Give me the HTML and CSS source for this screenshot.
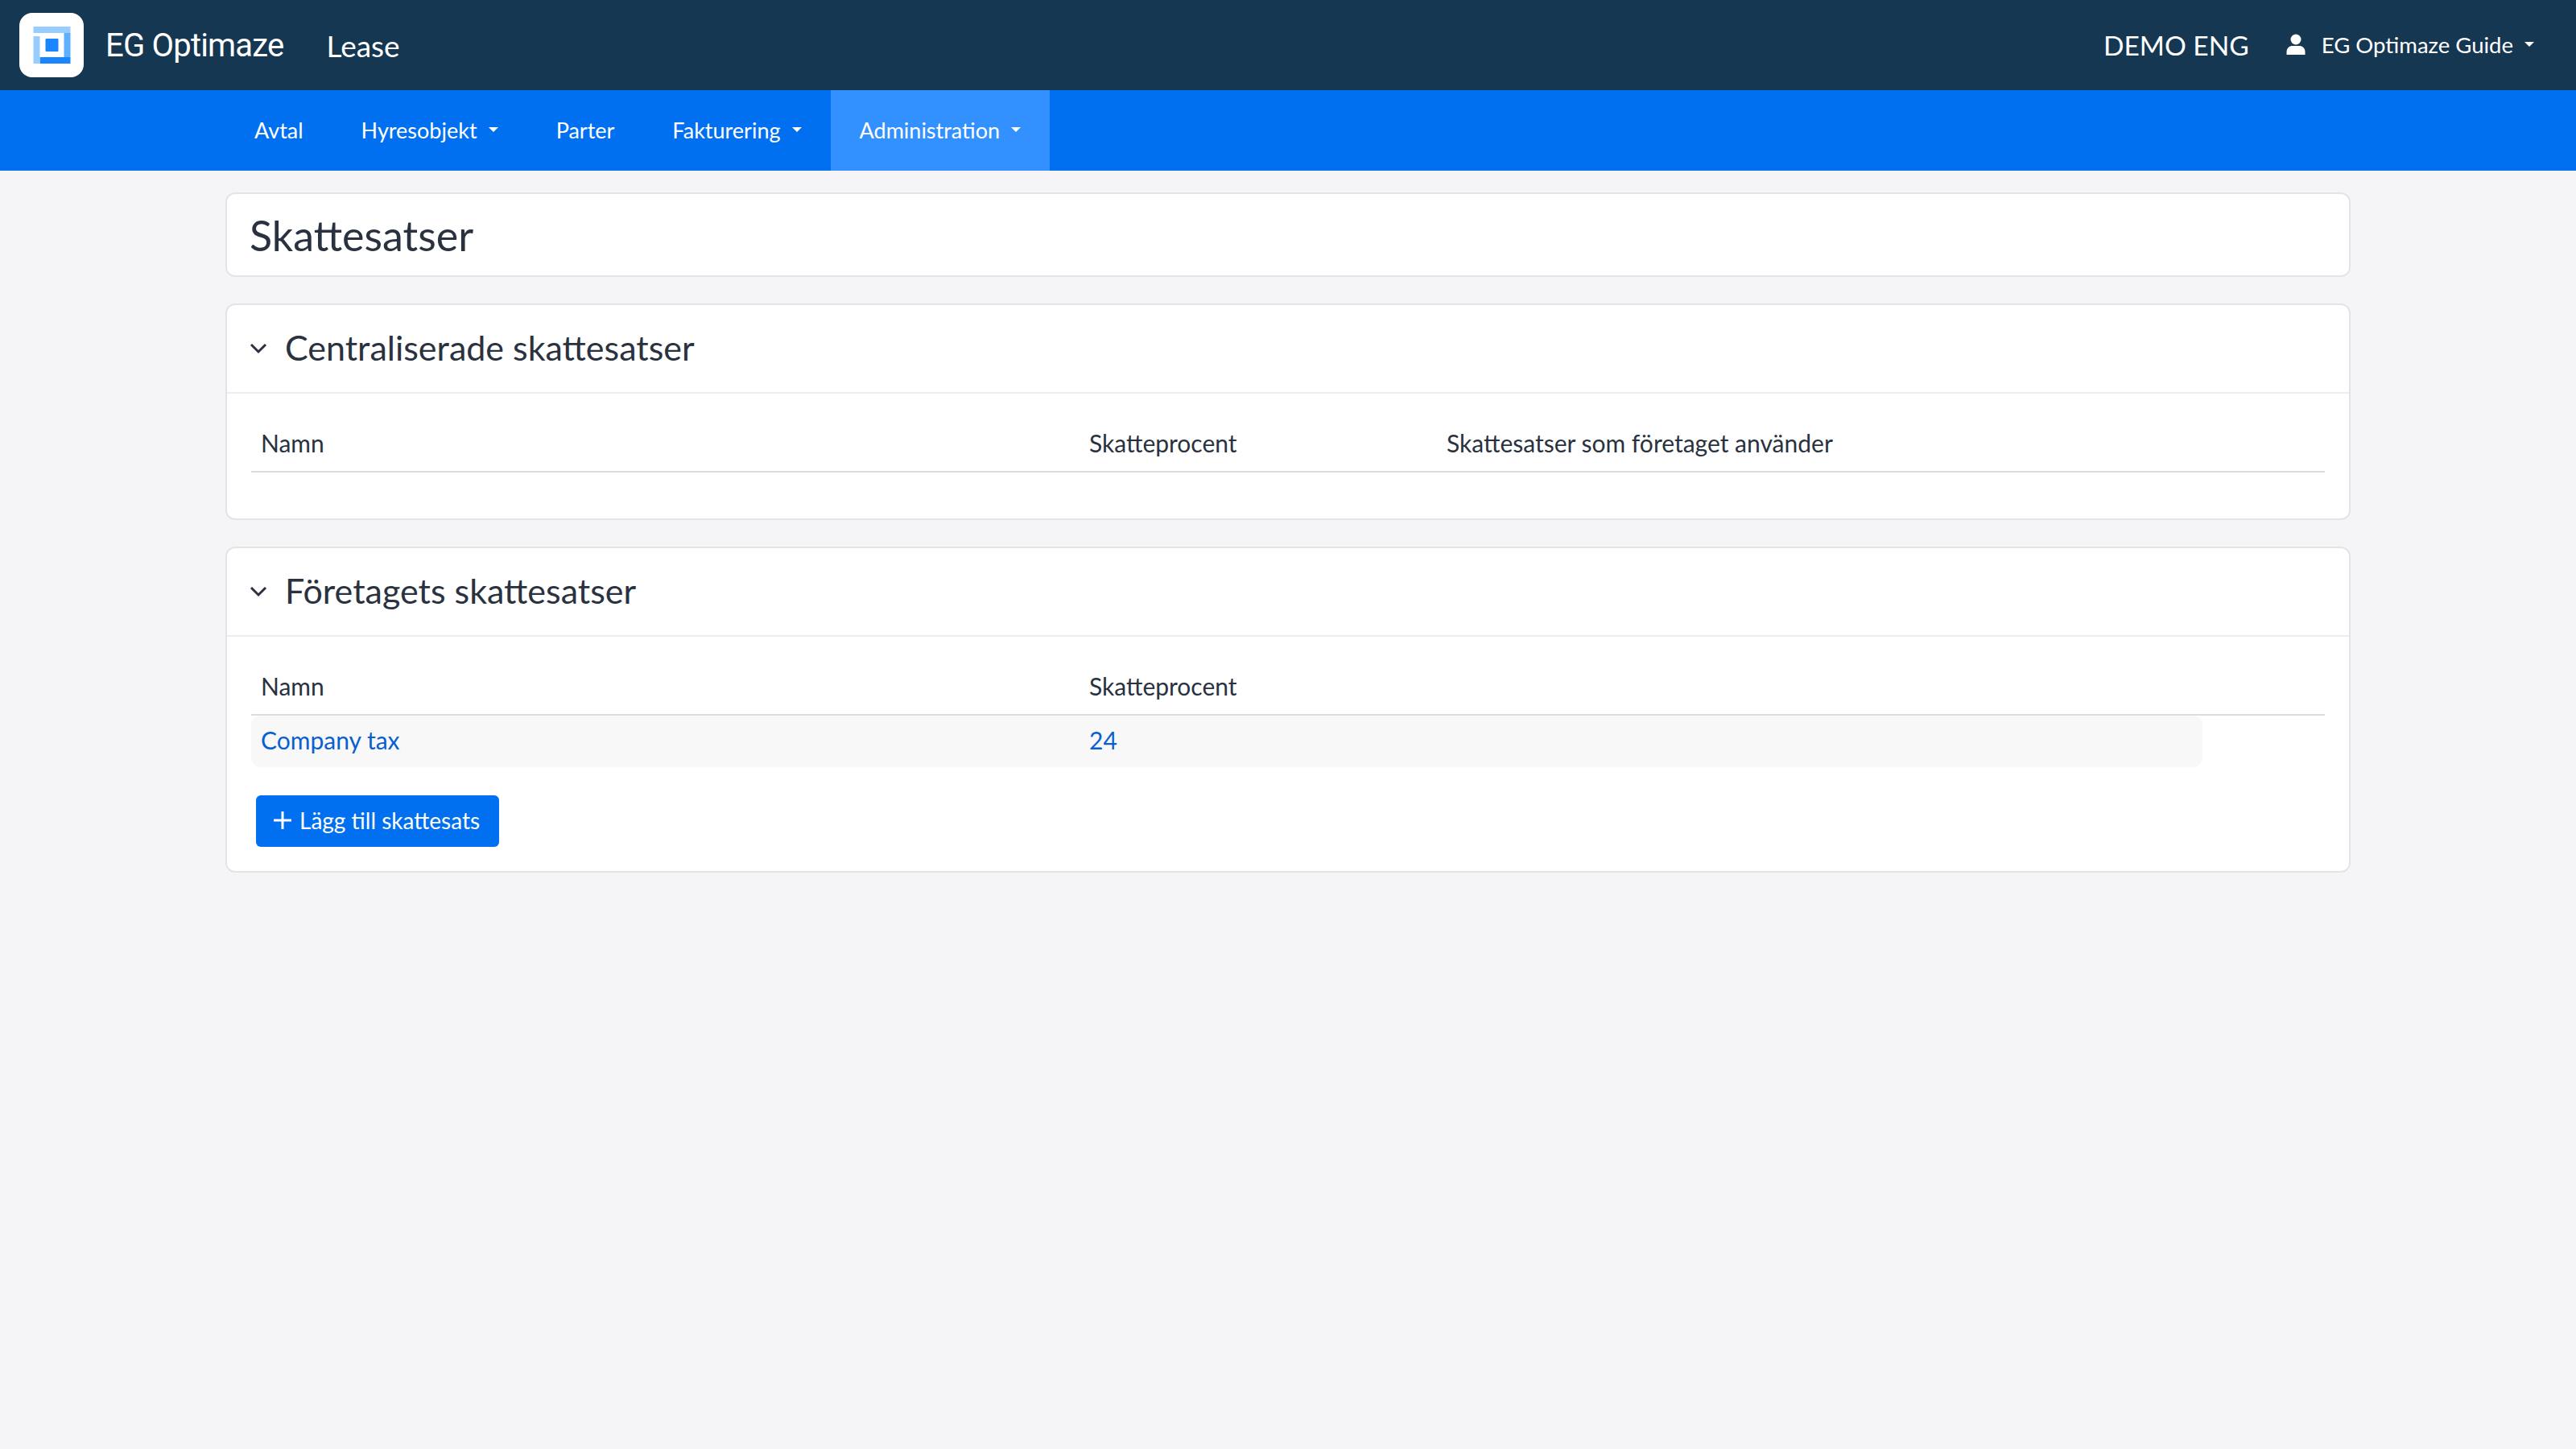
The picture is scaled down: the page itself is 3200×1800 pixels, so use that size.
FILE: index.html
```html
<!DOCTYPE html>
<html lang="sv">
<head>
  <meta charset="UTF-8" />
  <title>Skattesatser</title>
  <link rel="stylesheet" href="styles.css">
</head>
<body>
  <header class="topbar">
    <div class="logo-tile">
      <svg width="80" height="80" viewBox="0 0 80 80">
        <rect x="17.500" y="17" width="46" height="8" fill="#99ccff"/>
        <rect x="55.500" y="25" width="8" height="30" fill="#5cb0ff"/>
        <rect x="25.500" y="55" width="38" height="8" fill="#1a85ff"/>
        <rect x="17.500" y="29" width="8" height="34" fill="#99ccff"/>
        <rect x="32.500" y="32" width="16" height="16" rx="1" fill="#1a85ff"/>
      </svg>
    </div>
    <span class="brand">EG Optimaze</span>
    <span class="product">Lease</span>
    <div class="topbar-right">
      <span class="tenant">DEMO ENG</span>
      <a class="user-menu">
        <svg class="user-icon" width="24" height="26" viewBox="0 0 24 26">
          <circle cx="12" cy="7" r="6.500" fill="#fff"/>
          <path d="M0.500 26v-3.500C0.500 17.500 4 15 8 15h8c4 0 7.500 2.500 7.500 7.500V26z" fill="#fff"/>
        </svg>
        EG Optimaze Guide
        <span class="caret"></span>
      </a>
    </div>
  </header>

  <nav class="mainnav">
    <a class="nav-item">Avtal</a>
    <a class="nav-item">Hyresobjekt<span class="caret"></span></a>
    <a class="nav-item">Parter</a>
    <a class="nav-item">Fakturering<span class="caret"></span></a>
    <a class="nav-item active">Administration<span class="caret"></span></a>
  </nav>

  <main class="content">
    <section class="card title-card">
      <h1>Skattesatser</h1>
    </section>

    <section class="card">
      <div class="card-header">
        <svg class="chevron" width="22" height="14" viewBox="0 0 22 14"><path d="M2 2l9 9 9-9" fill="none" stroke="#2a3240" stroke-width="3"/></svg>
        <h2>Centraliserade skattesatser</h2>
      </div>
      <div class="card-body central-body">
        <div class="row head-row">
          <div class="cell">Namn</div>
          <div class="cell">Skatteprocent</div>
          <div class="cell">Skattesatser som företaget använder</div>
        </div>
      </div>
    </section>

    <section class="card">
      <div class="card-header">
        <svg class="chevron" width="22" height="14" viewBox="0 0 22 14"><path d="M2 2l9 9 9-9" fill="none" stroke="#2a3240" stroke-width="3"/></svg>
        <h2>Företagets skattesatser</h2>
      </div>
      <div class="card-body">
        <div class="row head-row">
          <div class="cell">Namn</div>
          <div class="cell">Skatteprocent</div>
        </div>
        <div class="row data-row">
          <a class="cell">Company tax</a>
          <a class="cell">24</a>
        </div>
        <button class="add-btn">
          <svg width="22" height="22" viewBox="0 0 22 22"><path d="M11 0v22M0 11h22" stroke="#fff" stroke-width="3"/></svg>
          Lägg till skattesats
        </button>
      </div>
    </section>
  </main>
</body>
</html>
```

FILE: styles.css
```css
:root {
  --navy: #153751;
  --blue: #0070f0;
  --text: #2a3240;
}

body {
  margin: 0;
  min-height: 1800px;
  background: #f5f5f7;
  color: var(--text);
  font-family: 'Lato', 'Noto Sans', sans-serif;
}

.topbar {
  display: flex;
  align-items: center;
  height: 112px;
  padding: 0 52px 0 24px;
  box-sizing: border-box;
  background: var(--navy);
  color: white;
}

.logo-tile {
  width: 80px;
  height: 80px;
  background: white;
  border-radius: 16px;
}

.brand {
  margin-left: 27px;
  font-family: 'Roboto', sans-serif;
  font-size: 40px;
  letter-spacing: -0.8px;
}

.product {
  margin-left: 53px;
  font-size: 37px;
}

.topbar-right {
  display: flex;
  align-items: center;
  margin-left: auto;
}

.tenant {
  font-size: 33.500px;
}

.user-menu {
  display: flex;
  align-items: center;
  margin-left: 46px;
  padding-bottom: 2px;
  font-size: 27.500px;
}

.user-icon {
  margin-right: 20px;
}

.caret {
  display: inline-block;
  width: 0;
  height: 0;
  margin-left: 14px;
  border-top: 6px solid white;
  border-left: 6px solid transparent;
  border-right: 6px solid transparent;
}

.mainnav {
  display: flex;
  height: 100px;
  padding-left: 280px;
  background: var(--blue);
  color: white;
}

.nav-item {
  display: flex;
  align-items: center;
  padding: 0 36px 2px;
  font-size: 27px;
}

.nav-item.active {
  background: #3391ff;
}

.content {
  display: flex;
  flex-direction: column;
  gap: 33px;
  width: 2640px;
  margin: 27px auto 0;
}

.card {
  box-sizing: border-box;
  background: white;
  border: 2px solid #e4e4e6;
  border-radius: 12px;
}

.title-card {
  height: 105px;
  padding: 0 28px;
}

h1 {
  margin: 0;
  font-size: 52px;
  font-weight: 400;
  line-height: 103px;
}

.card-header {
  display: flex;
  align-items: center;
  height: 108px;
  padding: 0 28px;
  border-bottom: 2px solid #eeeeee;
}

.chevron {
  margin-right: 22px;
}

h2 {
  margin: 0 0 4px;
  font-size: 43px;
  font-weight: 400;
}

.card-body {
  padding: 32px 30px 30px;
}

.central-body {
  height: 155px;
  box-sizing: border-box;
}

.row {
  display: grid;
  grid-template-columns: 1029px 444px 1fr;
  font-size: 30px;
}

.cell {
  padding: 0 12px;
}

.head-row {
  height: 64px;
  line-height: 59px;
  border-bottom: 2px solid #dddddd;
}

.data-row {
  width: 2424px;
  height: 64px;
  line-height: 60px;
  background: #f8f8f8;
  border-radius: 12px;
  color: #0a5fd0;
}

.add-btn {
  display: flex;
  align-items: center;
  gap: 10px;
  width: 302px;
  height: 64px;
  margin: 35px 0 0 6px;
  padding: 0 0 2px 22px;
  border: none;
  border-radius: 6px;
  background: var(--blue);
  color: white;
  font-family: inherit;
  font-size: 28px;
}
```
